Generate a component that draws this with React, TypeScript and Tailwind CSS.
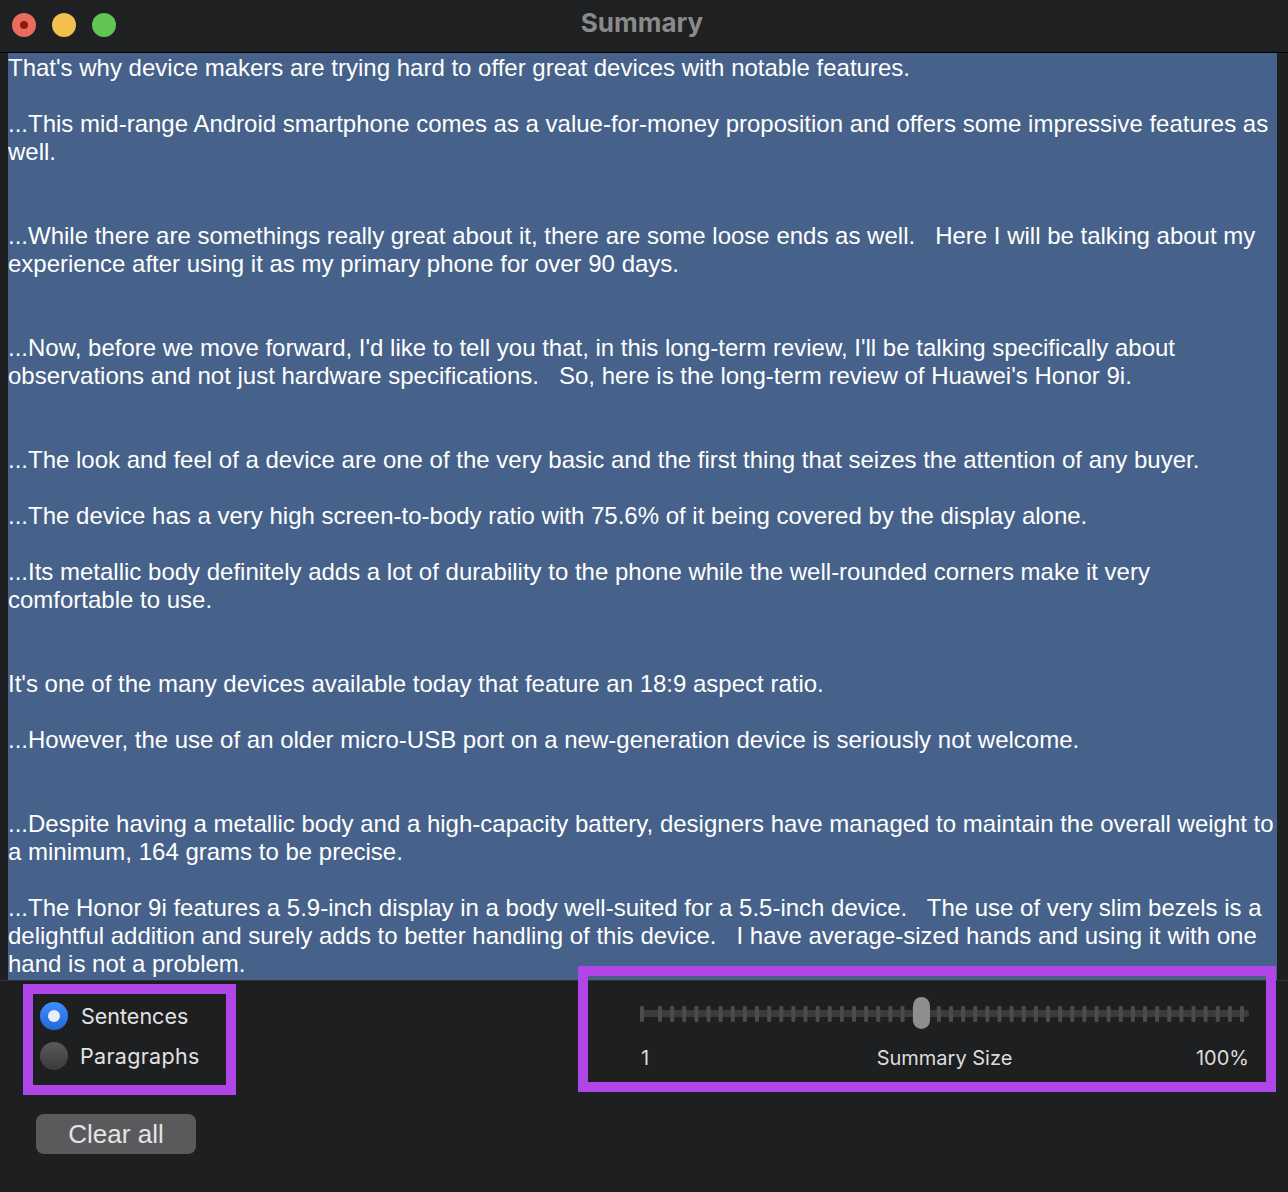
import React from "react";

const lines: string[] = [
  "That's why device makers are trying hard to offer great devices with notable features.",
  "",
  "...This mid-range Android smartphone comes as a value-for-money proposition and offers some impressive features as",
  "well.",
  "",
  "",
  "...While there are somethings really great about it, there are some loose ends as well.   Here I will be talking about my",
  "experience after using it as my primary phone for over 90 days.",
  "",
  "",
  "...Now, before we move forward, I'd like to tell you that, in this long-term review, I'll be talking specifically about",
  "observations and not just hardware specifications.   So, here is the long-term review of Huawei's Honor 9i.",
  "",
  "",
  "...The look and feel of a device are one of the very basic and the first thing that seizes the attention of any buyer.",
  "",
  "...The device has a very high screen-to-body ratio with 75.6% of it being covered by the display alone.",
  "",
  "...Its metallic body definitely adds a lot of durability to the phone while the well-rounded corners make it very",
  "comfortable to use.",
  "",
  "",
  "It's one of the many devices available today that feature an 18:9 aspect ratio.",
  "",
  "...However, the use of an older micro-USB port on a new-generation device is seriously not welcome.",
  "",
  "",
  "...Despite having a metallic body and a high-capacity battery, designers have managed to maintain the overall weight to",
  "a minimum, 164 grams to be precise.",
  "",
  "...The Honor 9i features a 5.9-inch display in a body well-suited for a 5.5-inch device.   The use of very slim bezels is a",
  "delightful addition and surely adds to better handling of this device.   I have average-sized hands and using it with one",
  "hand is not a problem.",
];

function Slider() {
  const ticks: number[] = [];
  for (let k = 0; k <= 48; k++) ticks.push(20 + k * 12.125);
  return (
    <div className="relative w-[609px] h-[32px]">
      <svg width="609" height="32" viewBox="0 0 609 32" className="block">
        <rect x="0" y="13" width="609" height="7" rx="3.5" fill="#3b3b3d" />
        <rect x="0" y="9" width="4" height="16" rx="1" fill="#4b4b4d" />
        {ticks.map((cx, i) => (
          <rect key={i} x={cx - 2} y="9" width="4" height="16" rx="1" fill="#4b4b4d" />
        ))}
      </svg>
      <div className="absolute left-[273px] top-0 w-[17px] h-[32px] rounded-full bg-[#8e8e90]" />
    </div>
  );
}

export default function App() {
  return (
    <div className="w-[1288px] h-[1192px] bg-[#1e1f21] relative overflow-hidden flex flex-col">
      {/* Title bar */}
      <div className="h-[53px] shrink-0 border-b border-black bg-[#1f2022] grid grid-cols-[1fr_auto_1fr] items-center">
        <div className="flex items-center gap-[16px] pl-[12px] pb-[3px]">
          <div className="w-[24px] h-[24px] rounded-full bg-[#ec6a5e] flex items-center justify-center">
            <div className="w-[8px] h-[8px] rounded-full bg-[#8e1b12]" />
          </div>
          <div className="w-[24px] h-[24px] rounded-full bg-[#f4bf4f]" />
          <div className="w-[24px] h-[24px] rounded-full bg-[#61c554]" />
        </div>
        <div className="text-[26px] font-bold text-[#8a8a8b] leading-none pb-[7px] pr-[4px] font-['Inter',sans-serif]">
          Summary
        </div>
        <div />
      </div>

      {/* Text area */}
      <div className="flex shrink-0 pl-[8px] pr-[11px]">
        <div className="w-[1269px] h-[927px] pt-[1px] bg-[#46628a] overflow-hidden text-white text-[24px] leading-[28px] font-['Liberation_Sans',Arial,sans-serif]">
          {lines.map((l, i) => (
            <div key={i} className="h-[28px] whitespace-pre">
              {l}
            </div>
          ))}
        </div>
      </div>

      {/* Bottom */}
      <div className="flex-1 border-t border-[#323335] flex">
        <div className="w-[640px] shrink-0 flex flex-col pt-[21px]">
          <div className="flex flex-col gap-[12px] pl-[40px]">
            <div className="flex items-center gap-[13px] h-[28px]">
              <div className="w-[28px] h-[28px] rounded-full bg-gradient-to-b from-[#3f8cff] to-[#2468d8] flex items-center justify-center">
                <div className="w-[12px] h-[12px] rounded-full bg-[#e8effc]" />
              </div>
              <span className="text-[21.5px] text-[#e2e2e2] font-['Inter',sans-serif]">Sentences</span>
            </div>
            <div className="flex items-center gap-[12px] h-[28px]">
              <div className="w-[28px] h-[28px] rounded-full bg-gradient-to-b from-[#5b5b5d] to-[#3a3a3c]" />
              <span className="text-[21.5px] text-[#e2e2e2] font-['Inter',sans-serif] tracking-[0.3px]">Paragraphs</span>
            </div>
          </div>
          <div className="pl-[36px] mt-[44px]">
            <div className="w-[160px] h-[40px] rounded-[8px] bg-[#5a5a5c] flex items-center justify-center text-[26px] text-[#e4e4e4] font-['Liberation_Sans',Arial,sans-serif]">
              Clear all
            </div>
          </div>
        </div>
        <div className="w-[609px] shrink-0 flex flex-col pt-[16px]">
          <Slider />
          <div className="mt-[17px] grid grid-cols-[1fr_auto_1fr] items-center h-[24px] text-[20px] leading-[24px] text-[#dcdcdc] font-['Inter',sans-serif]">
            <span className="pl-[1px]">1</span>
            <span>Summary Size</span>
            <span className="text-right">100%</span>
          </div>
        </div>
      </div>

      {/* Annotation overlays */}
      <div className="absolute left-[23px] top-[984px] w-[213px] h-[111px] border-[10px] border-[#b046e8] pointer-events-none" />
      <div className="absolute left-[578px] top-[966px] w-[698px] h-[126px] border-[10px] border-[#b046e8] pointer-events-none" />
    </div>
  );
}
